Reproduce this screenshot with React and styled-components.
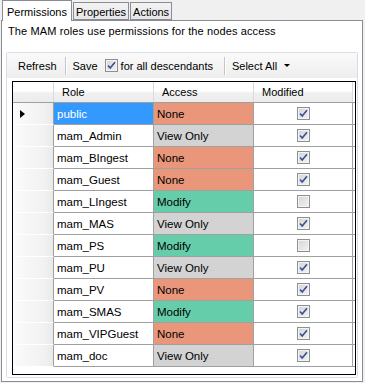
import React from "react";
import styled, { createGlobalStyle } from "styled-components";

const GlobalStyle = createGlobalStyle`
    body {
        margin: 0;
        background: #f0f0f0;
        font-family: "Liberation Sans", Arial, sans-serif;
        font-size: 11px;
        color: #000;
    }
`;

const accessColors = {
    None: "#e9967a",
    Modify: "#66cdaa",
    "View Only": "#d3d3d3",
};

const roles = [
    { role: "public", access: "None", modified: true },
    { role: "mam_Admin", access: "View Only", modified: true },
    { role: "mam_BIngest", access: "None", modified: true },
    { role: "mam_Guest", access: "None", modified: true },
    { role: "mam_LIngest", access: "Modify", modified: false },
    { role: "mam_MAS", access: "View Only", modified: true },
    { role: "mam_PS", access: "Modify", modified: false },
    { role: "mam_PU", access: "View Only", modified: true },
    { role: "mam_PV", access: "None", modified: true },
    { role: "mam_SMAS", access: "Modify", modified: true },
    { role: "mam_VIPGuest", access: "None", modified: true },
    { role: "mam_doc", access: "View Only", modified: true },
];

function CheckBox({ checked }) {
    return (
        <Box>
            {checked && (
                <svg width="9" height="9" viewBox="0 0 9 9">
                    <path
                        d="M1 4.5 L3.2 7 L8 1.2"
                        fill="none"
                        stroke="#3b4e94"
                        strokeWidth="1.6"
                    />
                </svg>
            )}
        </Box>
    );
}

export default function App() {
    return (
        <>
            <GlobalStyle />
            <Window>
                <TabStrip>
                    <Tab $active>Permissions</Tab>
                    <Tab>Properties</Tab>
                    <Tab>Actions</Tab>
                </TabStrip>
                <TabPanel>
                    <Description>
                        The MAM roles use permissions for the nodes access
                    </Description>
                    <Group>
                        <Toolbar>
                            <ToolButton>Refresh</ToolButton>
                            <Separator />
                            <ToolButton>Save</ToolButton>
                            <ToolCheck>
                                <CheckBox checked />
                                for all descendants
                            </ToolCheck>
                            <Separator />
                            <ToolButton>
                                Select All
                                <DropArrow />
                            </ToolButton>
                        </Toolbar>
                        <GridArea>
                            <Grid>
                                <HeaderRow>
                                    <HeaderCell />
                                    <HeaderCell>Role</HeaderCell>
                                    <HeaderCell>Access</HeaderCell>
                                    <HeaderCell>Modified</HeaderCell>
                                </HeaderRow>
                                {roles.map((item, index) => (
                                    <Row key={item.role}>
                                        <RowHeader>
                                            {index === 0 && <Pointer />}
                                        </RowHeader>
                                        <Cell $selected={index === 0}>
                                            {item.role}
                                        </Cell>
                                        <Cell $bg={accessColors[item.access]}>
                                            {item.access}
                                        </Cell>
                                        <CheckCell>
                                            <CheckBox checked={item.modified} />
                                        </CheckCell>
                                    </Row>
                                ))}
                            </Grid>
                        </GridArea>
                    </Group>
                </TabPanel>
            </Window>
        </>
    );
}

const Window = styled.div`
    width: 365px;
    height: 383px;
    box-sizing: border-box;
    padding: 0 2px 1px 1px;
    display: flex;
    flex-direction: column;
`;
const TabStrip = styled.div`
    display: flex;
    align-items: flex-end;
    height: 20px;
    padding-left: 1px;
    position: relative;
    z-index: 1;
`;
const Tab = styled.div`
    box-sizing: border-box;
    height: ${(p) => (p.$active ? "21px" : "18px")};
    margin-bottom: ${(p) => (p.$active ? "-1px" : "0")};
    padding: ${(p) => (p.$active ? "1px 4px 0 4px" : "1px 2px 0 2px")};
    margin-right: 1px;
    display: flex;
    align-items: center;
    border: 1px solid #898c95;
    border-bottom: ${(p) => (p.$active ? "none" : "1px solid #898c95")};
    background: ${(p) =>
        p.$active ? "#fff" : "linear-gradient(#f3f3f3, #e6e6e6)"};
`;
const TabPanel = styled.div`
    flex: 1;
    display: flex;
    flex-direction: column;
    background: #fff;
    border: 1px solid #898c95;
    padding: 3px 4px 3px 4px;
`;
const Description = styled.div`
    line-height: 15px;
    padding-left: 2px;
    margin-bottom: 13px;
    letter-spacing: 0.12px;
`;
const Group = styled.div`
    flex: 1;
    display: flex;
    flex-direction: column;
    border: 1px solid #d9dde3;
    border-radius: 2px;
`;
const Toolbar = styled.div`
    display: flex;
    align-items: center;
    height: 25px;
    padding-left: 7px;
    background: linear-gradient(#fafafa, #eeeeee);
`;
const ToolButton = styled.div`
    display: flex;
    align-items: center;
    padding: 0 4px;
`;
const ToolCheck = styled.div`
    display: flex;
    align-items: center;
    gap: 3px;
    padding: 0 7px 0 3px;
`;
const Separator = styled.div`
    width: 1px;
    height: 18px;
    background: #c5c5c5;
    border-right: 1px solid #fff;
    margin: 0 2px 0 4px;
`;
const DropArrow = styled.span`
    margin-left: 7px;
    width: 0;
    height: 0;
    border-left: 3px solid transparent;
    border-right: 3px solid transparent;
    border-top: 3px solid #000;
`;
const GridArea = styled.div`
    flex: 1;
    display: flex;
    padding: 3px 1px 2px 5px;
    background: #fff;
`;
const Grid = styled.div`
    flex: 1;
    border: 1px solid #000;
    background: #fff;
`;
const columns = "41px 100px 100px 99px";
const HeaderRow = styled.div`
    display: grid;
    grid-template-columns: ${columns};
    height: 21px;
    box-sizing: border-box;
    border-bottom: 1px solid #a0a0a0;
`;
const HeaderCell = styled.div`
    display: flex;
    align-items: center;
    padding-left: 8px;
    background: linear-gradient(#ffffff 0%, #ffffff 45%, #f0f0f0 55%, #ececec);
    border-right: 1px solid #dadada;
`;
const Row = styled.div`
    display: grid;
    grid-template-columns: ${columns};
    height: 22px;
    box-sizing: border-box;
    border-bottom: 1px solid #a0a0a0;
`;
const RowHeader = styled.div`
    display: flex;
    align-items: center;
    padding-left: 7px;
    background: linear-gradient(to right, #fbfbfb, #f1f1f1 80%, #e9e9e9);
    border-right: 1px solid #a0a0a0;
    border-bottom: 1px solid #fff;
    margin-bottom: -1px;
`;
const Pointer = styled.span`
    width: 0;
    height: 0;
    border-left: 5px solid #000;
    border-top: 4.5px solid transparent;
    border-bottom: 4.5px solid transparent;
`;
const Cell = styled.div`
    display: flex;
    align-items: center;
    padding-left: 3px;
    font-size: 11.5px;
    color: ${(p) => (p.$selected ? "#fff" : "#000")};
    background: ${(p) => (p.$selected ? "#3399ff" : p.$bg || "#fff")};
    border-right: 1px solid #a0a0a0;
`;
const CheckCell = styled.div`
    display: flex;
    align-items: center;
    justify-content: center;
    border-right: 1px solid #a0a0a0;
`;
const Box = styled.span`
    box-sizing: border-box;
    width: 13px;
    height: 13px;
    display: inline-flex;
    align-items: center;
    justify-content: center;
    border: 1px solid #8e8f8f;
    background: linear-gradient(135deg, #d4d4d4, #f4f4f4);
    box-shadow: inset 0 0 0 1px #f4f4f4;
`;
